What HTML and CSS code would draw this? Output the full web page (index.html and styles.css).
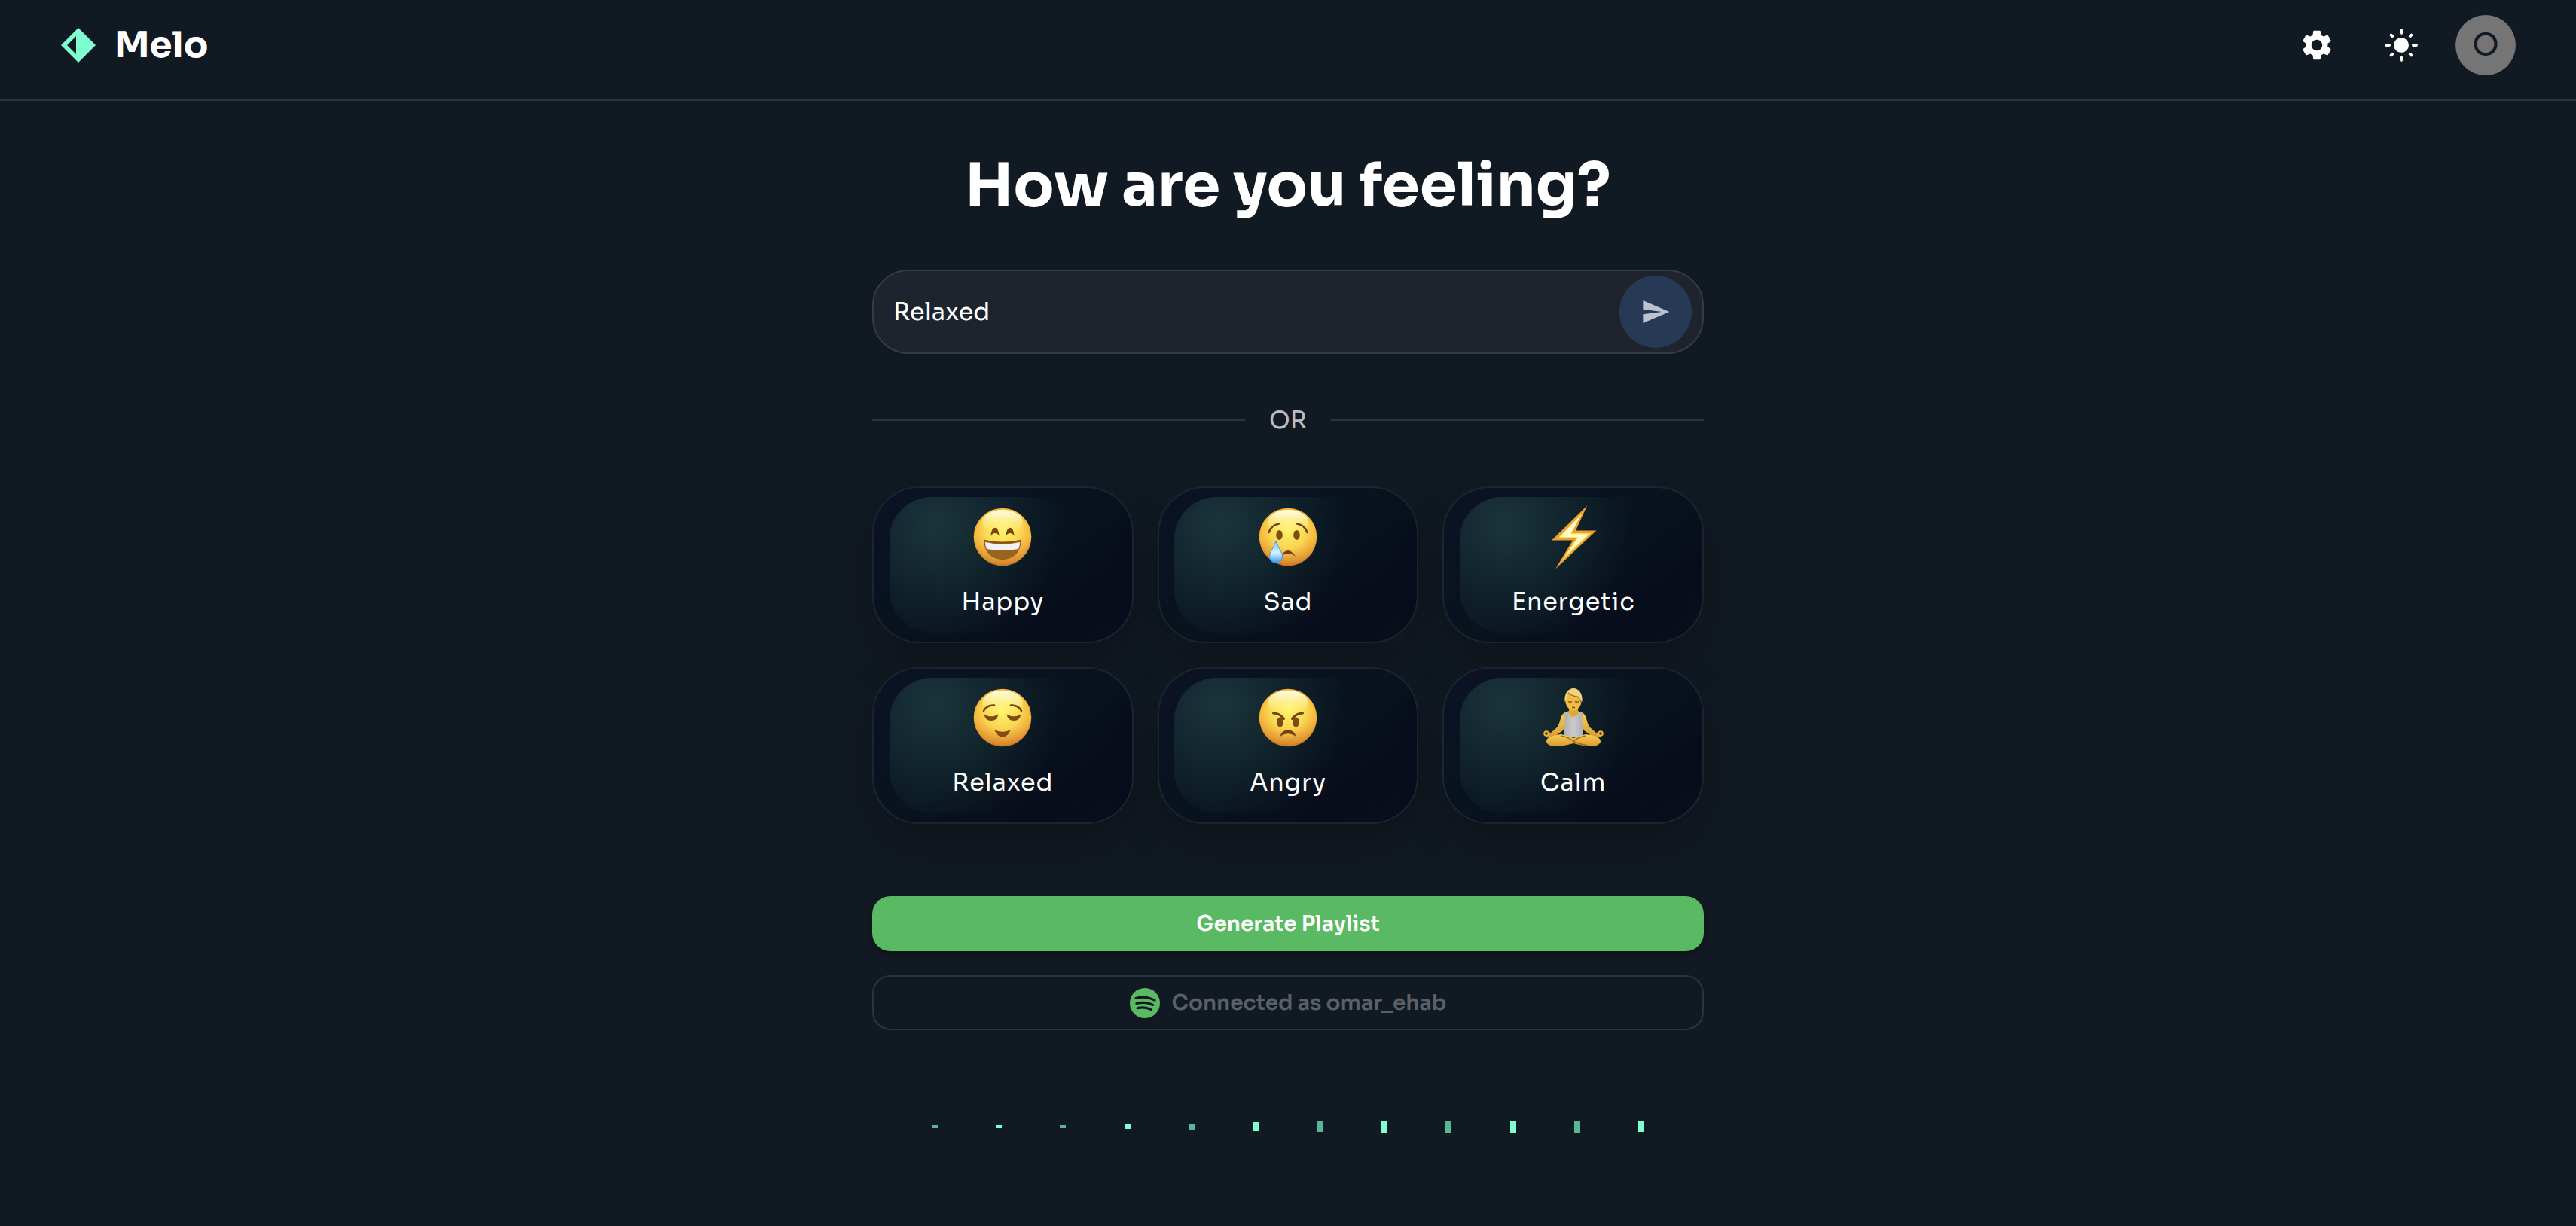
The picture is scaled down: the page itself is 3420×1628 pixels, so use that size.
FILE: index.html
```
<!DOCTYPE html>
<html lang="en">
<head>
<meta charset="utf-8">
<title>Melo</title>
<link rel="stylesheet" href="styles.css">
</head>
<body>
<svg width="0" height="0" class="defs" aria-hidden="true">
  <defs>
    <linearGradient id="face" x1="0" y1="0" x2="0" y2="1">
      <stop offset="0" stop-color="#fbb62f"/><stop offset=".5" stop-color="#f6b23a"/><stop offset="1" stop-color="#c97727"/>
    </linearGradient>
    <radialGradient id="glow" cx=".5" cy=".36" r=".64">
      <stop offset="0" stop-color="#fff66a"/><stop offset=".55" stop-color="#f9d552"/><stop offset="1" stop-color="#f2ac3a" stop-opacity=".2"/>
    </radialGradient>
    <linearGradient id="shine" x1="0" y1="0" x2="0" y2="1">
      <stop offset="0" stop-color="#fffef0"/><stop offset="1" stop-color="#fff47a" stop-opacity="0"/>
    </linearGradient>
    <linearGradient id="drop" x1="0" y1="0" x2="0" y2="1">
      <stop offset="0" stop-color="#7cc6ff"/><stop offset=".55" stop-color="#d5f2ff"/><stop offset="1" stop-color="#3694ee"/>
    </linearGradient>
    <linearGradient id="shirt" x1="0" y1="0" x2="1" y2="0">
      <stop offset="0" stop-color="#b0b0b4"/><stop offset=".5" stop-color="#cacacd"/><stop offset="1" stop-color="#b0b0b4"/>
    </linearGradient>
    <linearGradient id="skin" x1="0" y1="0" x2="0" y2="1">
      <stop offset="0" stop-color="#f8d157"/><stop offset="1" stop-color="#d99a30"/>
    </linearGradient>
    <g id="head">
      <circle cx="40" cy="40" r="38.3" fill="url(#face)"/>
      <circle cx="40" cy="40" r="36.5" fill="url(#glow)"/>
      <ellipse cx="40" cy="20" rx="27" ry="16" fill="url(#shine)"/>
    </g>
  </defs>
</svg>

<header class="topbar">
  <div class="brand">
    <svg class="brand-mark" viewBox="0 0 46 46"><path fill="#7fffd0" fill-rule="evenodd" d="M23 0 46 23 23 46 0 23ZM20 11 8 23 20 35Z"/></svg>
    <span class="brand-name">Melo</span>
  </div>
  <nav class="actions">
    <svg class="action" viewBox="0 0 24 24"><path fill="#fff" d="M19.14 12.94c.04-.3.06-.61.06-.94 0-.32-.02-.64-.07-.94l2.03-1.58c.18-.14.23-.41.12-.61l-1.92-3.32c-.12-.22-.37-.29-.59-.22l-2.39.96c-.5-.38-1.03-.7-1.62-.94l-.36-2.54c-.04-.24-.24-.41-.48-.41h-3.84c-.24 0-.43.17-.47.41l-.36 2.54c-.59.24-1.13.57-1.62.94l-2.39-.96c-.22-.08-.47 0-.59.22L2.74 8.87c-.12.21-.08.47.12.61l2.03 1.58c-.05.3-.09.63-.09.94s.02.64.07.94l-2.03 1.58c-.18.14-.23.41-.12.61l1.92 3.32c.12.22.37.29.59.22l2.39-.96c.5.38 1.03.7 1.62.94l.36 2.54c.05.24.24.41.48.41h3.84c.24 0 .44-.17.47-.41l.36-2.54c.59-.24 1.13-.56 1.62-.94l2.39.96c.22.08.47 0 .59-.22l1.92-3.32c.12-.22.07-.47-.12-.61l-2.01-1.58zM12 15.6c-1.98 0-3.6-1.62-3.6-3.6s1.62-3.6 3.6-3.6 3.6 1.62 3.6 3.6-1.62 3.6-3.6 3.6z"/></svg>
    <svg class="action" viewBox="0 0 24 24"><circle cx="12" cy="12" r="5" fill="#fff"/><path stroke="#fff" stroke-width="2" stroke-linecap="round" d="M12 2v2M12 20v2M2 12h2M20 12h2M5.3 5.3l.8.8M17.9 17.9l.8.8M18.7 5.3l-.8.8M6.1 17.9l-.8.8"/></svg>
    <div class="avatar">O</div>
  </nav>
</header>

<main class="content">
  <h1 class="title">How are you feeling?</h1>

  <div class="prompt">
    <span class="prompt-text">Relaxed</span>
    <div class="send"><svg class="send-icon" viewBox="0 0 24 24"><path fill="#bdc3cc" d="M2.01 21 23 12 2.01 3 2 10l15 2-15 2z"/></svg></div>
  </div>

  <div class="divider"><span class="divider-text">OR</span></div>

  <section class="moods">
    <div class="mood">
      <svg class="emoji" viewBox="0 0 80 80"><use href="#head"/>
        <path d="M24.5 39C25 24 35 24 35.500 39 33 33.500 27 33.500 24.500 39ZM44.500 39C45 24 55 24 55.500 39 53 33.500 47 33.500 44.500 39Z" fill="#7b4310"/>
        <path d="M15.500 45Q40 51 64.500 45C65 60 54 70 40 70S15 60 15.500 45Z" fill="#97651f"/>
        <path d="M17 47Q40 52 63 47 63 53 61 56 40 60 19 56 17 52 17 47Z" fill="#f2f2f6"/>
        <path d="M15.500 44.500Q40 50.500 64.500 44.500" fill="none" stroke="#8a4e0c" stroke-width="1.800"/></svg>
      <span class="mood-name">Happy</span>
    </div>
    <div class="mood">
      <svg class="emoji" viewBox="0 0 80 80"><use href="#head"/>
        <ellipse cx="28.500" cy="37.500" rx="4.300" ry="6.500" fill="#7f4b14"/><ellipse cx="51.500" cy="37.500" rx="4.300" ry="6.500" fill="#7f4b14"/>
        <path d="M14.500 34Q18 24 28 22.500M65.500 34Q62 24 52 22.500" fill="none" stroke="#75420f" stroke-width="2.500" stroke-linecap="round"/>
        <path d="M30 66Q40 50 50 66 40 58 30 66Z" fill="#744014"/>
        <path d="M24 45C27 55 32.500 60 32.500 66A8.500 8.500 0 0 1 15.500 66C15.500 60 21 55 24 45Z" fill="url(#drop)" stroke="#3a9af0"/></svg>
      <span class="mood-name">Sad</span>
    </div>
    <div class="mood">
      <svg class="emoji" viewBox="0 0 80 80">
        <path d="M58-1.500 11 44.500H39L16 82.500 70.500 31.500H43Z" fill="#ee9f33"/>
        <path d="M52 8 20 41H45L24 72 63 35H37Z" fill="#ffe34e"/>
        <path d="M50 11 22 40H47L30 64 60 36.500H36Z" fill="#fffcd2"/></svg>
      <span class="mood-name">Energetic</span>
    </div>
    <div class="mood">
      <svg class="emoji" viewBox="0 0 80 80"><use href="#head"/>
        <path d="M15 31Q19 23 29 23.500M65 31Q61 23 51 23.500" fill="none" stroke="#75420f" stroke-width="2.600" stroke-linecap="round"/>
        <path d="M15.500 35.500Q25 41 34.500 35.500 33 44 25 44T15.500 35.500ZM45.500 35.500Q55 41 64.500 35.500 63 44 55 44T45.500 35.500ZM29 56Q40 62 51 56 47 65.500 40 65.500T29 56Z" fill="#814a14"/></svg>
      <span class="mood-name">Relaxed</span>
    </div>
    <div class="mood">
      <svg class="emoji" viewBox="0 0 80 80"><use href="#head"/>
        <ellipse cx="29.500" cy="46" rx="4.500" ry="6.500" fill="#7f4b14"/><ellipse cx="50.500" cy="46" rx="4.500" ry="6.500" fill="#7f4b14"/>
        <path d="M20.500 34Q29 34 34.500 41.500M59.500 34Q51 34 45.500 41.500" fill="none" stroke="#75420f" stroke-width="3" stroke-linecap="round"/>
        <path d="M29.500 65Q31 56.500 40 56.500T50.500 65Q40 57.500 29.500 65Z" fill="#744014"/></svg>
      <span class="mood-name">Angry</span>
    </div>
    <div class="mood">
      <svg class="emoji" viewBox="0 0 80 80">
        <path d="M30 32 27 34C22 38 23 47 18 53L10 60 6 59 0 60 4 66 12 67 26 57 30 48M50 32 53 34C58 38 57 47 62 53L70 60 74 59 80 60 76 66 68 67 54 57 50 48" fill="url(#skin)"/>
        <circle cx="4" cy="61" r="2.800" fill="#3a2f1c" stroke="#e9b23f" stroke-width="2"/><circle cx="76" cy="61" r="2.800" fill="#3a2f1c" stroke="#e9b23f" stroke-width="2"/>
        <path d="M34 25H46V31L53 34 50 42H30L27 34 34 31Z" fill="#e0a637"/>
        <path d="M29 32H33C34 41 46 41 47 32H51L52.500 66H27.500Z" fill="url(#shirt)"/>
        <path d="M4 71C4 66 13 63 24 62L40 67 56 62C67 63 76 66 76 71 76 80 56 79 40 74 24 79 4 80 4 71Z" fill="url(#skin)"/>
        <path d="M23 64Q32 65 41 72 50 76 59 77M57 64Q48 65 40 71" fill="none" stroke="#a6681d" stroke-width="1.400"/>
        <ellipse cx="40" cy="16" rx="10.800" ry="14.500" fill="#edbd45"/>
        <path d="M28.500 19C26-5 54-5 51.500 19 48 16 47 12 44 11 39 10 35 9 33 7 32 12 31 16 28.500 19Z" fill="#efd27c"/>
        <path d="M33 7Q37 11 45 12 49 15 50 20" fill="none" stroke="#a46a1d" stroke-width="1.200"/>
        <path d="M33 18.500Q35.500 20 38 18.500M42 18.500Q44.500 20 47 18.500M38 26.500H42" fill="none" stroke="#80490f" stroke-width="1.300"/></svg>
      <span class="mood-name">Calm</span>
    </div>
  </section>

  <div class="button primary">Generate Playlist</div>
  <div class="button outline">
    <svg class="spotify" viewBox="0 0 40 40"><circle cx="20" cy="20" r="20" fill="#5ab963"/><path d="M8 13.500Q21 9.800 33 16.200M9 20.500Q20.500 17.500 30.500 22.500M10 26.700Q20 24.300 28 28.500" fill="none" stroke="#111922" stroke-width="3.100" stroke-linecap="round"/></svg>
    <span>Connected as omar_ehab</span>
  </div>

  <div class="equalizer">
    <i class="bar" style="height:4px"></i><i class="bar" style="height:4px"></i><i class="bar" style="height:4px"></i><i class="bar" style="height:6px"></i><i class="bar" style="height:8px"></i><i class="bar" style="height:12px"></i><i class="bar" style="height:14px"></i><i class="bar" style="height:16px"></i><i class="bar" style="height:16px"></i><i class="bar" style="height:16px"></i><i class="bar" style="height:16px"></i><i class="bar" style="height:14px"></i>
  </div>
</main>
</body>
</html>
```
FILE: styles.css
```
* { box-sizing: border-box; }

body {
  margin: 0;
  height: 1628px;
  overflow: hidden;
  background: #111922;
  color: #fff;
  font-family: Sora, Inter, "Noto Sans", sans-serif;
}

.defs { display: block; }

.topbar {
  display: flex;
  justify-content: space-between;
  align-items: center;
  height: 134px;
  padding: 0 80px 12px 81px;
  border-bottom: 2px solid #2e343e;
}

.brand { display: flex; align-items: center; gap: 25px; }
.brand-mark { width: 46px; height: 46px; }
.brand-name { font-size: 48px; line-height: 60px; font-weight: 700; }

.actions { display: flex; align-items: center; }
.action { width: 48px; height: 48px; margin-right: 64px; }
.action + .action { margin-right: 48px; }

.avatar {
  display: grid;
  place-items: center;
  width: 80px;
  height: 80px;
  padding-bottom: 3px;
  border-radius: 50%;
  background: #757575;
  color: #111922;
  font-size: 41px;
}

.content { width: 1104px; margin: 0 auto; padding-top: 62px; }

.title {
  margin: 0 0 62px;
  font-size: 80px;
  line-height: 100px;
  font-weight: 700;
  text-align: center;
  white-space: nowrap;
}

.prompt {
  display: flex;
  align-items: center;
  justify-content: space-between;
  height: 112px;
  padding: 0 14px 0 26px;
  border: 2px solid #363c46;
  border-radius: 48px;
  background: #1e242e;
}

.prompt-text { font-size: 32px; }

.send {
  display: grid;
  place-items: center;
  width: 96px;
  height: 96px;
  border-radius: 50%;
  background: #263a55;
}

.send-icon { width: 40px; height: 40px; }

.divider {
  display: flex;
  align-items: center;
  gap: 32px;
  height: 48px;
  margin: 64px 0;
}

.divider::before, .divider::after { content: ""; flex: 1; height: 2px; background: #2e343e; }
.divider-text { text-align: center; color: #b9bcc0; font-size: 32px; line-height: 48px; }

.moods { display: grid; grid-template-columns: repeat(3, 1fr); gap: 32px; }

.mood {
  position: relative;
  display: flex;
  flex-direction: column;
  align-items: center;
  height: 208px;
  padding-top: 25px;
  border: 2px solid #1d242f;
  border-radius: 62px;
  background: linear-gradient(145deg, #0b1225 0%, #08131e 48%, #080d1b 75%, #080e1c 100%) padding-box;
  box-shadow: 0 28px 60px rgba(0, 0, 0, .2);
}

.mood::before {
  content: "";
  position: absolute;
  inset: 6%;
  border-radius: 56px;
  background: radial-gradient(circle at 20% 20%, rgba(127, 255, 208, .145), transparent 60%);
}

.emoji { position: relative; width: 80px; height: 80px; overflow: visible; }
.mood-name { position: relative; margin-top: 22px; font-size: 32px; line-height: 48px; letter-spacing: .8px; }

.button {
  display: flex;
  align-items: center;
  justify-content: center;
  height: 73px;
  border-radius: 24px;
  font-size: 28px;
  font-weight: 600;
}

.primary {
  margin: 96px 0 32px;
  background: #5ab963;
  box-shadow: 0 3px 7px rgba(0, 0, 0, .28);
}

.outline { gap: 16px; border: 2px solid #2e343e; color: #5b6068; }
.spotify { width: 40px; height: 40px; }

.equalizer {
  display: flex;
  align-items: center;
  justify-content: space-around;
  height: 64px;
  margin: 96px 40px 0;
}

.bar { width: 8px; background: #5ab699; }
.bar:nth-child(even) { background: #7fffd0; }
```
